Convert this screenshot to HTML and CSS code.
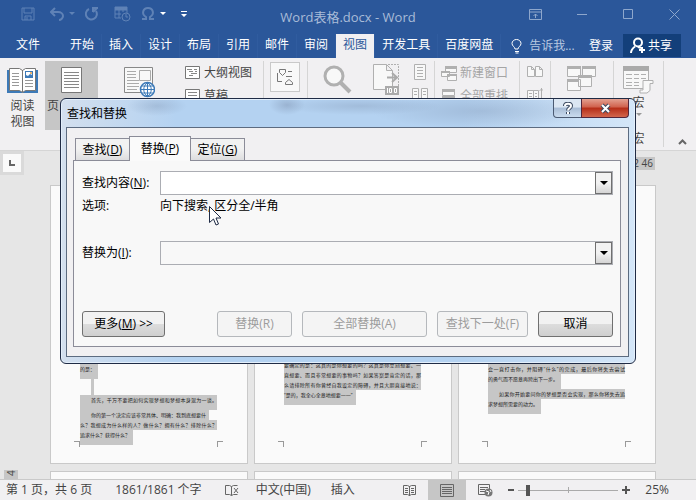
FILE: index.html
```
<!DOCTYPE html>
<html lang="zh-CN">

<head>
  <meta charset="UTF-8" />
  <meta name="viewport" content="width=device-width, initial-scale=1.0" />
  <title>Word表格.docx - Word</title>
  <link rel="stylesheet" href="styles.css">
</head>

<body>
  <!-- 标题栏 -->
  <header class="titlebar">
    <div class="quick">
      <button class="icon-btn" aria-label="保存"><svg width="14" height="14" viewBox="0 0 14 14"><path d="M1 1h12v12H1zM3 1v5h8V1M4 13V9h6v4M6 10v3" /></svg></button>
      <button class="icon-btn" aria-label="撤消"><svg width="14" height="14" viewBox="0 0 14 14"><path class="bold" d="M5 1L1 5l4 4M1 5h7c3 0 5 2 5 4s-2 4-4 4" /></svg></button>
      <button class="icon-btn caret dim" aria-label="撤消列表"><svg width="6" height="4" viewBox="0 0 6 4"><path class="fill" d="M0 0h6L3 3z" /></svg></button>
      <button class="icon-btn" aria-label="重复"><svg width="14" height="14" viewBox="0 0 14 14"><path class="bold" d="M4 2a5.500 5.500 0 1 0 7 2M8 5V1h5M8 5l4-4" /></svg></button>
      <button class="icon-btn" aria-label="日期"><svg width="17" height="16" viewBox="0 0 17 16"><path d="M1 1h12v6M1 1v11h6M1 4h12M1 8h6M5 1v11M9 1v5" /><path class="fill" d="M1 1h12v3H1z" /><circle cx="12" cy="11" r="4" /><path d="M12 8v3h2" /></svg></button>
      <button class="icon-btn omega" aria-label="符号"><svg width="14" height="14" viewBox="0 0 14 14"><path class="bold" d="M1 12h4v-2C0 7 2 1 7 1s7 6 2 9v2h4" /></svg></button>
      <button class="icon-btn caret" aria-label="符号列表"><svg width="6" height="4" viewBox="0 0 6 4"><path class="fill" d="M0 0h6L3 3z" /></svg></button>
      <button class="icon-btn more" aria-label="自定义"><svg width="6" height="7" viewBox="0 0 6 7"><path class="fill" d="M0 0h6v1H0zM0 3h6L3 6z" /></svg></button>
    </div>
    <span class="doc-name">Word表格.docx - Word</span>
    <div class="win-btns">
      <button class="icon-btn" aria-label="功能区选项"><svg width="13" height="11" viewBox="0 0 13 11"><path d="M.5.5h12v10H.5zM.5 3h12M6.500 9V5M4.500 7l2-2 2 2" /></svg></button>
      <button class="icon-btn" aria-label="最小化"><svg width="11" height="11" viewBox="0 0 11 11"><path d="M0 5.500h10" /></svg></button>
      <button class="icon-btn" aria-label="最大化"><svg width="11" height="11" viewBox="0 0 11 11"><path d="M.5.5h9v9h-9z" /></svg></button>
      <button class="icon-btn" aria-label="关闭"><svg width="11" height="11" viewBox="0 0 11 11"><path d="M.5.5l10 10M10.500.5l-10 10" /></svg></button>
    </div>
  </header>

  <!-- 选项卡 -->
  <nav class="tabs">
    <a class="file" href="#">文件</a>
    <a href="#">开始</a>
    <a href="#">插入</a>
    <a href="#">设计</a>
    <a href="#">布局</a>
    <a href="#">引用</a>
    <a href="#">邮件</a>
    <a href="#">审阅</a>
    <a class="active" href="#">视图</a>
    <a href="#">开发工具</a>
    <a href="#">百度网盘</a>
    <button class="tell"><svg width="12" height="15" viewBox="0 0 12 15"><path d="M4 10c0-2-3-3-3-5.500a4.500 4 0 0 1 9 0C10 7 7 8 7 10zM4 12.500h4M4.500 14h3" /></svg>告诉我...</button>
    <button class="login">登录</button>
    <button class="share"><svg width="16" height="17" viewBox="0 0 16 17"><circle cx="8" cy="5.500" r="4" /><path d="M1 16c0-3 2-5 4-6.500M8 10l3 1M12 10v6M9 13h6" /></svg>共享</button>
  </nav>

  <!-- 功能区 -->
  <section class="ribbon">
    <button class="big read">
      <svg width="31" height="27" viewBox="0 0 31 27"><path fill="#3d7ab8" d="M0 3h31v23H0z" /><path fill="#fff" stroke="#777" d="M2.500 1.500h10l3 2 3-2h10v22h-10l-3 2-3-2h-10zM15.500 3v22" /><path stroke="#999" d="M5 6.500h7M5 9.500h7M5 12.500h7M5 15.500h7M5 18.500h7M18 13.500h8M18 16.500h8M18 19.500h8" /><path fill="#3d7ab8" d="M18 4h8v7h-8z" /><path fill="#fff" d="M19 5h6v3l-2-1-2 2-2-1z" /><circle cx="24" cy="6" r="1" fill="#e59a3c" /></svg>
      <span>阅读<br>视图</span>
    </button>
    <button class="big page-view" aria-label="页面视图">
      <svg width="21" height="27" viewBox="0 0 21 27"><path fill="#fff" stroke="#777" d="M.5.5h20v25H.5z" /><path stroke="#888" d="M3 5.500h15M3 8.500h15M3 11.500h15M3 14.500h15M3 17.500h15M3 20.500h15" /></svg>
      <span>页</span>
    </button>
    <button class="big web-view" aria-label="Web 版式视图">
      <svg width="31" height="31" viewBox="0 0 31 31"><path fill="#f8f8f8" stroke="#888" d="M.5.5h28v25H.5z" /><path stroke="#aaa" d="M3 4.500h9M3 7.500h9M3 10.500h9M3 13.500h12M3 16.500h12M3 19.500h12M3 22.500h10M15.500 3.500h11v10h-11z" /><circle cx="23.500" cy="22.500" r="7" fill="#fff" stroke="#3d7ab8" stroke-width="1.500" /><path stroke="#3d7ab8" d="M17 22.500h14M18 19h11M18 26h11M23.500 15v15M23.500 15.500c-5 4-5 10 0 14M23.500 15.500c5 4 5 10 0 14" /></svg>
    </button>
    <div class="group views">
      <button class="small"><svg width="15" height="14" viewBox="0 0 15 14"><path fill="#fff" stroke="#777" d="M.5.5h14v12H.5z" /><path stroke="#888" d="M2 3.500h5M4 5.500h4M6 7.500h6M4 9.500h4M9 3.500h3M10 5.500h2" /></svg>大纲视图</button>
      <button class="small"><svg width="15" height="14" viewBox="0 0 15 14"><path fill="#fff" stroke="#777" d="M.5.5h14v13H.5z" /><path stroke="#888" d="M3 3.500h9M3 6.500h9M3 9.500h9" /></svg>草稿</button>
    </div>
    <div class="group show">
      <button class="box" aria-label="显示"><svg width="18" height="19" viewBox="0 0 18 19"><path stroke="#777" d="M3.500 1.500h6v3l-3 3-3-3zM1.500 5v8.500H6M12 3.500h4M10 8.500h6M9.500 16.500v-2l3.500-3 3.500 3v2z" /></svg></button>
    </div>
    <div class="group zoom">
      <button class="big magnify" aria-label="显示比例"><svg width="29" height="29" viewBox="0 0 29 29"><circle cx="11" cy="11" r="9" fill="#f8f8f8" stroke="#b0b0b0" stroke-width="3" /><path stroke="#b0b0b0" stroke-width="4" d="M18 18l9 9" /></svg></button>
      <button class="big hundred" aria-label="100%"><svg width="27" height="34" viewBox="0 0 27 34"><path fill="#f8f8f8" stroke="#b0b0b0" d="M.5 1.500h13l6 6v19H.5zM13.500 1.500v6h6" /><path stroke="#b0b0b0" stroke-dasharray="2 1" d="M15 1.500h10.500v23" /><path stroke="#aaa" stroke-width="2" d="M14 14.500h9M19 10l5 4.500-5 4.500" /><path fill="#aaa" d="M12 23h14v9H12z" /><path stroke="#fff" d="M14.500 25v5M16.500 25.500h2v4h-2zM21.500 25.500h2v4h-2z" /></svg></button>
      <div class="stack">
        <button aria-label="单页"><svg width="12" height="17" viewBox="0 0 12 17"><path fill="#f8f8f8" stroke="#b0b0b0" d="M.5.5h11v15H.5zM3 3.500h6M3 6.500h6M3 9.500h6M3 12.500h6" /></svg></button>
        <button aria-label="多页"><svg width="17" height="17" viewBox="0 0 17 17"><path fill="#f8f8f8" stroke="#b0b0b0" d="M.5.5h6v15h-6zM9.500.5h6v15h-6zM2 3.500h3M2 6.500h3M11 3.500h3M11 6.500h3" /></svg></button>
      </div>
    </div>
    <div class="group window">
      <button class="small off"><svg width="16" height="15" viewBox="0 0 16 15"><path fill="#f8f8f8" stroke="#b0b0b0" d="M4.500.5h11v6h-11zM.5 5.500h8v5h-8zM6.500 8.500h9v6h-9z" /><path fill="#b0b0b0" d="M4 0h12v3H4zM0 5h9v2H0zM6 8h10v2H6z" /></svg>新建窗口</button>
      <button class="small off"><svg width="16" height="15" viewBox="0 0 16 15"><path fill="#f8f8f8" stroke="#b0b0b0" d="M1.500.5h12v6h-12zM1.500 7.500h12v6h-12z" /><path fill="#b0b0b0" d="M1 0h13v3H1zM1 7h13v3H1z" /></svg>全部重排</button>
    </div>
    <div class="group side">
      <div class="stack">
        <button aria-label="并排查看"><svg width="16" height="17" viewBox="0 0 16 17"><path fill="#f8f8f8" stroke="#b0b0b0" d="M.5 2.500h4l3 3v7h-7zM8.500 2.500h4l3 3v7h-7zM4.500 2.500v3h3M12.500 2.500v3h3" /></svg></button>
        <button aria-label="同步滚动"><svg width="16" height="17" viewBox="0 0 16 17"><path fill="#f8f8f8" stroke="#b0b0b0" d="M.5 2.500h6v13h-6zM6.500 2.500h5v13h-5zM2 5.500h3M2 8.500h3M8 5.500h2M8 8.500h2M14.500 0v13M12.500 3l2-2 2 2" /></svg></button>
      </div>
    </div>
    <div class="group switch">
      <button class="big" aria-label="切换窗口"><svg width="30" height="27" viewBox="0 0 30 27"><path fill="#f8f8f8" stroke="#b0b0b0" d="M.5.5h13v10H.5zM15.500.5h13v10h-13zM.5 13.500h13v11H.5zM11.500 9.500h13v11h-13z" /><path fill="#b0b0b0" d="M0 0h14v3H0zM15 0h14v3H15zM0 13h11v3H0zM11 9h14v3H11z" /></svg></button>
    </div>
    <div class="group macro">
      <button class="big"><svg width="31" height="28" viewBox="0 0 31 28"><path fill="#f8f8f8" stroke="#b0b0b0" d="M.5.5h25v22H.5z" /><path fill="#aaa" d="M0 0h26v5H0z" /><path stroke="#b0b0b0" d="M3 8.500h6M11 8.500h5M18 8.500h5M3 12.500h6M11 12.500h5M18 12.500h5M3 16.500h6M11 16.500h5M3 19.500h6M11 19.500h5" /><path fill="#f8f8f8" stroke="#b0b0b0" d="M20 14.500h10v3h-3v7l-3 2.500h-7v-3h3z" /></svg><span>宏</span><svg class="drop" width="6" height="4" viewBox="0 0 6 4"><path fill="#999" d="M0 0h6L3 3z" /></svg></button>
      <span class="caption">宏</span>
    </div>
    <button class="collapse" aria-label="折叠功能区"><svg width="9" height="6" viewBox="0 0 9 6"><path d="M1 5l3.500-3.500L8 5" /></svg></button>
  </section>

  <!-- 文档区 -->
  <main class="work">
    <div class="ruler">
      <button class="tab-stop" aria-label="制表符"><svg width="8" height="8" viewBox="0 0 8 8"><path d="M2 1v5h5" /></svg></button>
      <span class="scale">2 46</span>
    </div>
    <div class="canvas">
      <div class="v-ruler"><span>4</span></div>
      <div class="pages">
        <article class="page">
          <i class="mark left"></i>
          <div class="text lower">
            <p><span>的是：</span></p>
            <p class="empty"><span></span></p>
            <p><span class="indent full">首先，千万不要把如何实现梦想和梦想本身混为一谈。</span></p>
            <p><span class="indent">你的第一个决定应该非常具体、明确：我到底想要什</span><span class="full">么？我想成为什么样的人？做什么？拥有什么？排除什么？</span><span>追求什么？获得什么？</span></p>
          </div>
          <i class="mark right"></i>
        </article>
        <article class="page">
          <i class="mark left"></i>
          <div class="text">
            <p><span class="full">要确定的是：这真的是你想要的吗？这真是你立刻想要、一</span><span class="full">直想要、而且非常想要的事物吗？如果答案是肯定的话，那</span><span class="full">么请排除所有你曾经自我设定的障碍，并且大胆直接地说：</span><span>“是的，我全心全意地想要——”</span></p>
          </div>
          <i class="mark right"></i>
        </article>
        <article class="page">
          <i class="mark left"></i>
          <div class="text lower">
            <p><span class="full">会一直打击你，并阻碍“什么”的完成，最后你将失去尝试</span><span>的勇气而不愿意再跨出下一步。</span></p>
            <p><span class="indent full">如果你开始要问你的梦想是否会实现，那么你将失去追</span><span>求梦想所需要的动力。</span></p>
          </div>
          <i class="mark right"></i>
        </article>
        <article class="page"></article>
        <article class="page"></article>
        <article class="page"></article>
      </div>
    </div>
  </main>

  <!-- 状态栏 -->
  <footer class="status">
    <span class="page-no">第 1 页，共 6 页</span>
    <span class="words">1861/1861 个字</span>
    <svg class="proof" width="15" height="13" viewBox="0 0 15 13"><path d="M.5 1.500h4l2 1v9l-2-1h-4zM6.500 2.500l2-1h4M6.500 11.500l2-1h4M9 4l4 5M13 4L9 9" /></svg>
    <span class="lang">中文(中国)</span>
    <span class="mode">插入</span>
    <div class="view-btns">
      <button aria-label="阅读视图"><svg width="13" height="13" viewBox="0 0 13 13"><path d="M.5 1.500h4l2 1 2-1h4v9h-4l-2 1-2-1h-4zM6.500 2v10M2 4.500h3M2 6.500h3M2 8.500h3M8 4.500h3M8 6.500h3M8 8.500h3" /></svg></button>
      <button class="active" aria-label="页面视图"><svg width="14" height="13" viewBox="0 0 14 13"><path d="M.5.5h13v12H.5zM2 3.500h10M2 5.500h10M2 7.500h10M2 9.500h10" /></svg></button>
      <button aria-label="Web 版式视图"><svg width="15" height="13" viewBox="0 0 15 13"><path d="M8 10.500H.5V.5h11V5M2 3.500h8M2 5.500h5M2 7.500h5" /><circle cx="10.500" cy="8.500" r="4" fill="#777" stroke="none" /><path stroke="#fff" d="M8 7l3 1-1 3M12 6l1 2" /></svg></button>
    </div>
    <button class="step minus" aria-label="缩小"></button>
    <input class="slider" type="range" min="0" max="100" value="8" aria-label="缩放级别">
    <button class="step plus" aria-label="放大"></button>
    <span class="percent">25%</span>
  </footer>

  <!-- 查找和替换 -->
  <div class="dialog" role="dialog" aria-label="查找和替换">
    <div class="dialog-head">
      <span class="dialog-title">查找和替换</span>
      <button class="help" aria-label="帮助"><svg width="10" height="13" viewBox="0 0 10 13"><path class="edge" d="M2 4c0-3 6-3 6 0 0 2-3 2-3 4.500M5 10v2" /><path class="core" d="M2 4c0-3 6-3 6 0 0 2-3 2-3 4.500M5 10v2" /></svg></button>
      <button class="close" aria-label="关闭"><svg width="13" height="11" viewBox="0 0 13 11"><path class="edge" d="M3 2l7 7M10 2L3 9" /><path class="core" d="M3 2l7 7M10 2L3 9" /></svg></button>
    </div>
    <div class="client">
      <div class="dialog-tabs">
        <button>查找(<u>D</u>)</button>
        <button class="active">替换(<u>P</u>)</button>
        <button>定位(<u>G</u>)</button>
      </div>
      <form class="pane">
        <div class="row">
          <label for="find">查找内容(<u>N</u>):</label>
          <div class="combo"><input class="lit" id="find" type="text"><button type="button" aria-label="查找历史"><svg width="8" height="4" viewBox="0 0 8 4"><path d="M0 0h8L4 4z" /></svg></button></div>
        </div>
        <div class="row options">
          <span class="key">选项:</span>
          <span>向下搜索, 区分全/半角</span>
        </div>
        <div class="row">
          <label for="replace">替换为(<u>I</u>):</label>
          <div class="combo"><input id="replace" type="text"><button type="button" aria-label="替换历史"><svg width="8" height="4" viewBox="0 0 8 4"><path d="M0 0h8L4 4z" /></svg></button></div>
        </div>
        <div class="actions">
          <button type="button" class="more-btn">更多(<u>M</u>) &gt;&gt;</button>
          <button type="button" class="w-short" disabled>替换(R)</button>
          <button type="button" class="w-long" disabled>全部替换(A)</button>
          <button type="button" class="w-mid" disabled>查找下一处(F)</button>
          <button type="button" class="w-short">取消</button>
        </div>
      </form>
    </div>
    <svg class="cursor" width="13" height="20" viewBox="0 0 13 20"><path d="M.5.5v16l4-3.500 2.500 6 2.500-1-2.500-6h5z" /></svg>
  </div>
</body>

</html>
```
FILE: styles.css
```
* {
  margin: 0;
  padding: 0;
  box-sizing: border-box;
}

body {
  display: flex;
  flex-direction: column;
  height: 100vh;
  overflow: hidden;
  position: relative;
  font: 12px/16px "Open Sans", "Noto Sans CJK SC", sans-serif;
  color: #444;
}

button,
input {
  font: inherit;
  color: inherit;
  border: 0;
  background: none;
}

button {
  white-space: nowrap;
}

svg {
  display: block;
  fill: none;
  flex: none;
}

a {
  text-decoration: none;
  color: inherit;
}

/* 标题栏 */
.titlebar {
  display: grid;
  grid-template-columns: 1fr auto 1fr;
  height: 34px;
  background: #2b579a;
  color: #a9bcd8;
}

.quick {
  display: flex;
  align-items: center;
  height: 28px;
  padding-left: 21px;
  gap: 15px;
}

.icon-btn {
  stroke: #5f82b6;
}

.icon-btn .bold {
  stroke-width: 2;
}

.icon-btn .fill {
  fill: #5f82b6;
  stroke: none;
}

.quick .omega {
  margin-left: -5px;
}

.quick .caret {
  margin-left: -10px;
  margin-right: -5px;
}

.quick .caret:not(.dim) .fill,
.more .fill {
  fill: #fff;
}

.more {
  margin-left: 5px;
}

.doc-name {
  font-size: 13px;
  line-height: 34px;
}

.win-btns {
  display: flex;
  align-items: center;
  justify-content: flex-end;
  height: 28px;
  padding-right: 16px;
  gap: 35px;
}

.win-btns .icon-btn {
  stroke: #8ea7cc;
}

/* 选项卡 */
.tabs {
  display: flex;
  height: 24px;
  line-height: 22px;
  background: #2b579a;
  color: #fff;
}

.tabs a {
  padding: 0 7px;
  border-right: 1px solid #305c9f;
}

.tabs .file {
  width: 63px;
  padding: 0 16px;
  border: 0;
}

.tabs .active {
  background: #f1f0f2;
  color: #2b579a;
}

.tell,
.share {
  display: flex;
  align-items: center;
}

.tell {
  gap: 6px;
  margin-left: 10px;
  color: #b9c9e1;
}

.tell svg,
.share svg {
  stroke: #fff;
}

.login {
  margin-left: auto;
  padding: 0 10px;
}

.share {
  width: 58px;
  height: 23px;
  margin-right: 15px;
  padding-left: 7px;
  gap: 2px;
  background: #133f7a;
}

.share svg {
  stroke-width: 2;
}

/* 功能区 */
.ribbon {
  display: flex;
  height: 93px;
  padding-top: 3px;
  background: #f1f0f2;
  border-bottom: 1px solid #d5d5d5;
}

.big {
  display: flex;
  flex-direction: column;
  align-items: center;
  height: 69px;
  padding-top: 6px;
}

.big span {
  margin-top: auto;
  height: 32px;
}

.read {
  width: 45px;
}

.page-view {
  width: 53px;
  background: #c6c6c6;
}

.page-view span {
  align-self: flex-start;
  padding-left: 2px;
}

.web-view {
  width: 83px;
}

.group {
  height: 86px;
  border-right: 1px solid #d5d5d5;
}

.views {
  width: 83px;
  padding: 3px 0 0 4px;
}

.small {
  display: flex;
  align-items: center;
  gap: 4px;
  height: 18px;
  margin-bottom: 5px;
}

.off {
  color: #a5a5a5;
}

.show {
  width: 44px;
  padding: 1px 6px;
}

.box {
  display: grid;
  place-items: center;
  width: 30px;
  height: 30px;
  background: #f8f8f8;
  border: 1px solid #c9c9c9;
}

.zoom {
  display: flex;
  width: 127px;
}

.magnify {
  width: 58px;
  padding-top: 4px;
}

.hundred {
  width: 40px;
  padding-top: 2px;
}

.stack {
  display: flex;
  flex: 1;
  flex-direction: column;
  align-items: center;
  gap: 7px;
  padding-top: 3px;
}

.window {
  width: 85px;
  padding: 3px 0 0 6px;
}

.window .small {
  gap: 3px;
}

.side {
  width: 31px;
}

.switch {
  width: 63px;
}

.switch .big,
.macro .big {
  width: 100%;
  padding-top: 5px;
}

.macro {
  display: flex;
  flex-direction: column;
  align-items: center;
  width: 50px;
}

.macro .big span {
  height: 18px;
}

.macro .drop {
  margin-bottom: 8px;
}

.caption {
  margin-top: 6px;
}

.collapse {
  align-self: flex-end;
  margin: 0 9px 5px auto;
  stroke: #666;
  stroke-width: 2;
}

/* 文档区 */
.work {
  display: flex;
  flex: 1;
  flex-direction: column;
  min-height: 0;
  overflow: hidden;
  background: #e6e6e6;
}

.ruler {
  display: flex;
  flex: none;
  justify-content: space-between;
  height: 34px;
}

.tab-stop {
  display: grid;
  place-items: center;
  width: 24px;
  height: 24px;
  background: #fafafa;
  border: 3px solid #dadada;
  stroke: #666;
  stroke-width: 2;
}

.scale {
  width: 80px;
  height: 13px;
  margin: 6px 41px 0 0;
  padding-right: 2px;
  background: #c6c6c6;
  font-size: 10px;
  line-height: 13px;
  text-align: right;
}

.canvas {
  display: flex;
}

.v-ruler {
  width: 50px;
  padding: 285px 0 0 4px;
}

.v-ruler span {
  display: block;
  width: 14px;
  height: 14px;
  background: #c6c6c6;
  font-size: 10px;
  line-height: 14px;
  writing-mode: vertical-rl;
  transform: rotate(180deg);
  text-align: right;
}

.pages {
  display: grid;
  flex: 1;
  grid-template-columns: repeat(3, 1fr);
  gap: 7px 6px;
  margin-right: 40px;
}

.page {
  display: flex;
  height: 279px;
  padding: 0 24px 16px 23px;
  background: #fafafa;
  border: 1px solid #c9c9c9;
}

.mark {
  align-self: flex-end;
  width: 6px;
  height: 6px;
  border-top: 1px solid #999;
}

.mark.left {
  border-right: 1px solid #999;
}

.mark.right {
  border-left: 1px solid #999;
}

.text {
  flex: 1;
  padding-top: 174px;
  font-size: 5px;
  line-height: 10px;
  color: #222;
  white-space: nowrap;
}

.text.lower {
  padding-top: 178px;
}

/* 每行一个选区色块 */
.text span {
  display: block;
  width: fit-content;
  height: 10px;
  padding-right: 3px;
  background: #c6c6c6;
}

.text span:last-child {
  height: 15px;
}

/* 满行两端对齐 */
.text .full {
  width: auto;
  padding-right: 0;
  text-align: justify;
  text-align-last: justify;
  white-space: normal;
}

.text .indent {
  padding-left: 11px;
}

.text .empty {
  padding-left: 11px;
}

.text .empty span {
  height: 16px;
}

/* 状态栏 */
.status {
  display: flex;
  align-items: center;
  height: 21px;
  padding: 0 27px 0 6px;
  background: #f1f0f2;
  border-top: 1px solid #c9c9c9;
  white-space: nowrap;
}

.status svg {
  stroke: #666;
}

.words,
.proof {
  margin-left: 23px;
}

.lang {
  margin-left: 16px;
}

.mode {
  margin-left: 20px;
}

.view-btns {
  display: flex;
  height: 20px;
  margin-left: auto;
}

.view-btns button {
  display: grid;
  place-items: center;
  width: 38px;
}

.view-btns .active {
  background: #c6c6c6;
}

.step {
  width: 8px;
  height: 8px;
}

.minus {
  margin-left: 3px;
  background: linear-gradient(#555, #555) center / 6px 2px no-repeat;
}

.plus {
  margin-left: 4px;
  background: linear-gradient(#555, #555) center / 8px 2px no-repeat, linear-gradient(#555, #555) center / 2px 8px no-repeat;
}

.slider {
  width: 100px;
  height: 12px;
  margin-left: 3px;
  appearance: none;
  background: linear-gradient(#aaa, #aaa) center / 100% 1px no-repeat, linear-gradient(#aaa, #aaa) center / 1px 6px no-repeat;
}

.slider::-webkit-slider-thumb {
  appearance: none;
  width: 4px;
  height: 11px;
  background: #555;
}

.percent {
  margin-left: 15px;
}

/* 对话框 */
.dialog {
  position: absolute;
  top: 98px;
  left: 60px;
  right: 60px;
  padding: 0 6px 6px 5px;
  color: #000;
  background:
    radial-gradient(ellipse 30px 10px at 96px 7px, #8fa6c480, transparent),
    radial-gradient(ellipse 18px 10px at 226px 6px, #8fa6c4b0, transparent),
    radial-gradient(ellipse 80px 9px at 300px 7px, #8fa6c480, transparent),
    radial-gradient(ellipse 110px 18px at 420px 12px, #8fa6c480, transparent),
    linear-gradient(90deg, #d3dfee, #b4d2f1 20%, #b4d2f1 70%, #d4e6f8);
  border: 1px solid #1f2b45;
  border-radius: 6px;
  box-shadow: inset 0 0 0 1px #e3effb;
}

.dialog-head {
  display: flex;
  height: 28px;
}

.dialog-title {
  flex: 1;
  padding-left: 1px;
  line-height: 29px;
}

.help,
.close {
  display: grid;
  place-items: center;
  height: 19px;
  border: 1px solid #4b5a72;
  border-top: 0;
}

.help {
  width: 29px;
  background: linear-gradient(#dbe6f2 45%, #a9bdd6 50%, #c9dbee);
  border-radius: 0 0 0 4px;
}

.close {
  width: 48px;
  margin-left: -1px;
  background: linear-gradient(#e3a090, #d0614c 45%, #b52d17 50%, #d2664d);
  border-color: #53263a;
  border-radius: 0 0 4px 0;
}

.edge {
  stroke: #3c4a60;
  stroke-width: 4;
}

.core {
  stroke: #fff;
  stroke-width: 2;
}

.client {
  padding: 8px 7px 9px 6px;
  background: #f1f0f2;
  border: 1px solid #5c6b80;
}

.dialog-tabs {
  display: flex;
  align-items: flex-end;
  height: 25px;
  padding-left: 2px;
  margin-bottom: -1px;
  position: relative;
}

.dialog-tabs button {
  width: 55px;
  height: 23px;
  background: linear-gradient(#f2f2f2 45%, #dddddf);
  border: 1px solid #8b8c98;
}

.dialog-tabs .active {
  width: 62px;
  height: 25px;
  margin: 0 -1px;
  background: #fafafa;
  border-bottom: 0;
}

.pane {
  padding: 10px 7px 9px 8px;
  background: #f8f8f8;
  border: 1px solid #8b8c98;
}

.row {
  display: flex;
  align-items: center;
}

.row label,
.key {
  width: 78px;
}

.combo {
  display: flex;
  flex: 1;
  height: 24px;
  border: 1px solid #abadb3;
}

.combo input {
  flex: 1;
  min-width: 0;
  padding: 0 4px;
  outline: 0;
}

.combo .lit {
  background: #fff;
}

.combo button {
  display: grid;
  place-items: center;
  width: 17px;
  background: linear-gradient(#f2f2f2 50%, #d5d5d5);
  border: 1px solid #707070;
}

.combo path {
  fill: #000;
}

.options {
  height: 46px;
  padding-bottom: 24px;
}

.actions {
  display: flex;
  gap: 10px;
  margin-top: 46px;
}

.actions button {
  height: 26px;
  background: linear-gradient(#f2f2f2 50%, #dddddd 50%, #cfcfcf);
  border: 1px solid #707070;
  border-radius: 3px;
}

.actions button:disabled {
  color: #9c9c9c;
  background: #f4f4f4;
  border-color: #b5b8bc;
}

.actions .more-btn {
  width: 83px;
  margin-right: auto;
}

.w-short {
  width: 75px;
}

.w-mid {
  width: 91px;
}

.w-long {
  width: 125px;
}

.cursor {
  position: absolute;
  top: 107px;
  left: 148px;
  fill: #fff;
  stroke: #1f2b45;
}
```
